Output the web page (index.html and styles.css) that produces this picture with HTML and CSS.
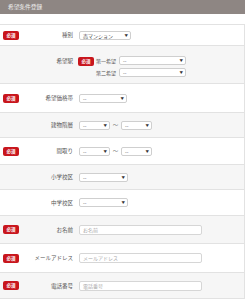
FILE: index.html
```html
<!doctype html>
<html>
	<head>
		<link rel="stylesheet" href="styles.css">
	</head>
	<body>
		<div class="head">希望条件登録</div>
		<div class="form">
			<div class="row r1">
				<span class="req">必須</span>
				<span class="lbl">種別</span>
				<div class="ctl"><span class="sel w52">売マンション</span></div>
			</div>
			<div class="row r2 alt">
				<span class="req hide">必須</span>
				<span class="lbl top">希望駅</span>
				<div class="ctl station">
					<span class="req">必須</span>
					<div class="pair">
						<div class="line"><span class="sub">第一希望</span><span class="sel w67">--</span></div>
						<div class="line"><span class="sub">第二希望</span><span class="sel w67">--</span></div>
					</div>
				</div>
			</div>
			<div class="row r3">
				<span class="req">必須</span>
				<span class="lbl">希望価格帯</span>
				<div class="ctl"><span class="sel w48">--</span></div>
			</div>
			<div class="row r4 alt">
				<span class="req hide">必須</span>
				<span class="lbl">建物階層</span>
				<div class="ctl"><span class="sel w31">--</span><span class="tilde">～</span><span class="sel w31">--</span></div>
			</div>
			<div class="row r5">
				<span class="req">必須</span>
				<span class="lbl">間取り</span>
				<div class="ctl"><span class="sel w31">--</span><span class="tilde">～</span><span class="sel w31">--</span></div>
			</div>
			<div class="row r6 alt">
				<span class="req hide">必須</span>
				<span class="lbl">小学校区</span>
				<div class="ctl"><span class="sel w49">--</span></div>
			</div>
			<div class="row r7">
				<span class="req hide">必須</span>
				<span class="lbl">中学校区</span>
				<div class="ctl"><span class="sel w49">--</span></div>
			</div>
			<div class="row r8 alt">
				<span class="req">必須</span>
				<span class="lbl">お名前</span>
				<div class="ctl"><span class="inp">お名前</span></div>
			</div>
			<div class="row r9">
				<span class="req">必須</span>
				<span class="lbl">メールアドレス</span>
				<div class="ctl"><span class="inp">メールアドレス</span></div>
			</div>
			<div class="row r10 alt">
				<span class="req">必須</span>
				<span class="lbl">電話番号</span>
				<div class="ctl"><span class="inp">電話番号</span></div>
			</div>
		</div>
	</body>
</html>
```
FILE: styles.css
```css
*{padding:0px;margin:0px;box-sizing:border-box;}
body{
	background:white;
	font-family:"Noto Sans CJK JP","Noto Sans",sans-serif;
	color:#555;
	font-size:5.5px;
}
.head{
	height:14px;
	background:#8e8683;
	color:#eee;
	font-size:5.7px;
	line-height:14px;
	padding-left:8px;
}
.form{
	margin-top:10px;
	border-top:1px solid #e2e2e2;
	border-right:1px solid #e2e2e2;
}
.row{
	display:flex;
	align-items:center;
	border-bottom:1px solid #e2e2e2;
}
.alt{background:#f6f6f6;}
.r1{height:21px;}
.r2{height:38px;align-items:flex-start;padding-top:10px;}
.r3{height:29px;}
.r4{height:25px;}
.r5{height:27px;}
.r6{height:25px;}
.r7{height:26px;}
.r8{height:28px;}
.r9{height:29px;}
.r10{height:26px;}
.req{
	display:inline-block;
	width:16px;
	height:9px;
	margin-left:3px;
	background:#c8161d;
	border-radius:2px;
	color:white;
	font-size:4.5px;
	line-height:9px;
	text-align:center;
	font-weight:bold;
}
.hide{visibility:hidden;}
.lbl{
	width:55px;
	text-align:right;
	padding-right:1px;
}
.lbl.top{margin-top:1px;}
.ctl{
	margin-left:5px;
	display:flex;
	align-items:center;
}
.sel{
	display:inline-block;
	position:relative;
	height:9px;
	line-height:7px;
	border:1px solid #cfcfcf;
	border-radius:2px;
	background:white;
	padding-left:3px;
	font-size:5px;
	color:#444;
}
.sel::after{
	content:"▼";
	position:absolute;
	right:2px;
	top:0px;
	font-size:3.5px;
	color:#333;
}
.w52{width:52px;}
.w48{width:48px;}
.w49{width:49px;}
.w67{width:67px;}
.w31{width:31px;}
.tilde{
	width:11px;
	text-align:center;
	color:#777;
}
.station{align-items:flex-start;margin-left:4px;}
.station .req{margin-left:0px;margin-right:2px;margin-top:1px;}
.pair{display:flex;flex-direction:column;gap:3px;}
.line{display:flex;align-items:center;}
.sub{width:23px;font-size:5px;}
.inp{
	display:inline-block;
	width:123px;
	height:10px;
	line-height:8px;
	border:1px solid #d6d6d6;
	border-radius:2px;
	background:white;
	padding-left:3px;
	color:#aaa;
	font-size:5px;
}
```
